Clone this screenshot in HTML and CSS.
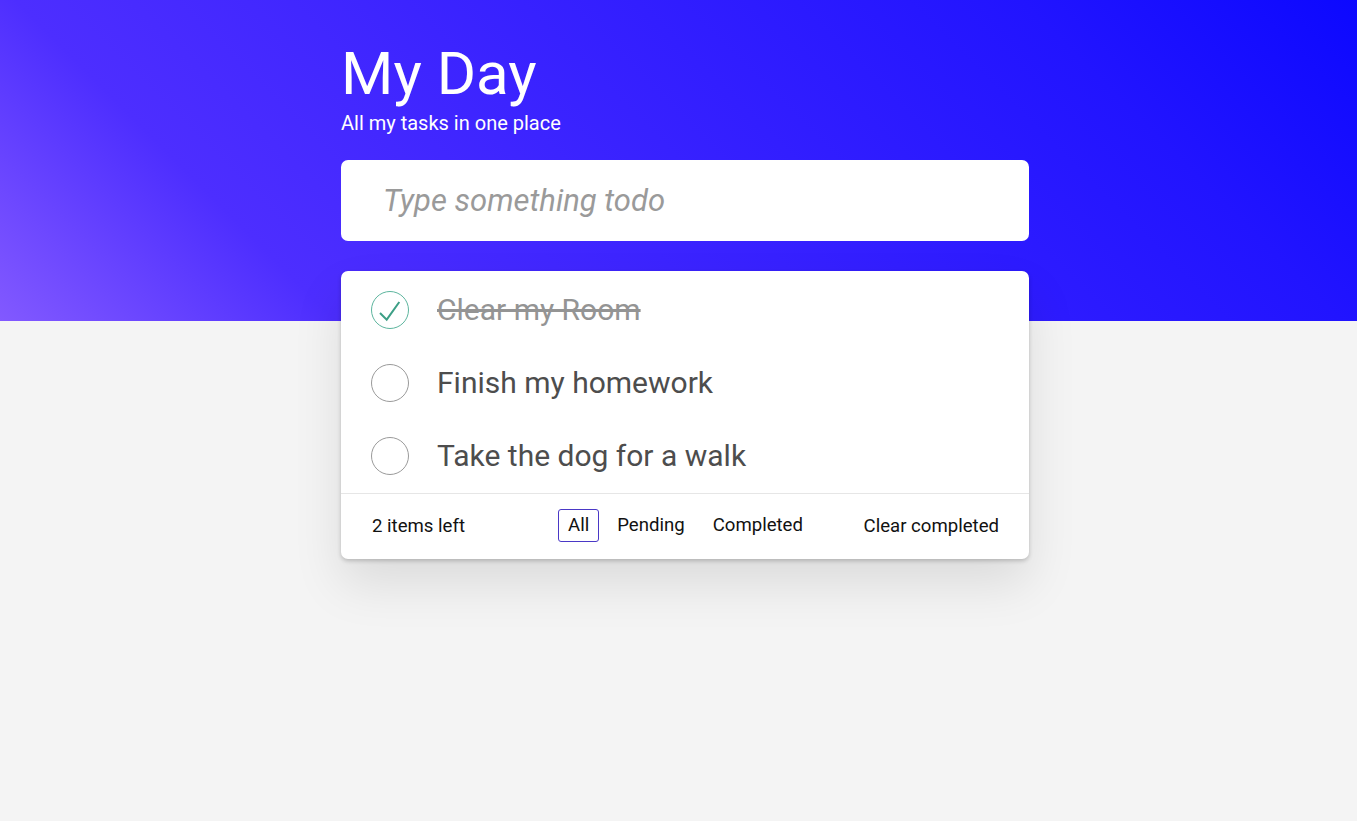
FILE: index.html
```html
<!DOCTYPE html>
<html lang="en">
<head>
<meta charset="utf-8">
<title>My Day</title>
<link rel="stylesheet" href="styles.css">
</head>
<body>
<main class="app">
  <header class="app-header">
    <h1 class="title">My Day</h1>
    <p class="subtitle">All my tasks in one place</p>
  </header>
  <input class="new-todo" type="text" placeholder="Type something todo">
  <section class="card">
    <ul class="todo-list">
      <li class="todo done">
        <span class="toggle">
          <svg viewBox="0 0 38 38" width="38" height="38"><circle cx="19" cy="19" r="18.5" fill="none" stroke="#5db59e" stroke-width="1"/><path d="M9 22 L15.7 28.7 L28.3 11" fill="none" stroke="#3d9f86" stroke-width="2"/></svg>
        </span>
        <span class="label">Clear my Room</span>
      </li>
      <li class="todo">
        <span class="toggle">
          <svg viewBox="0 0 38 38" width="38" height="38"><circle cx="19" cy="19" r="18.5" fill="none" stroke="#9a9a9a" stroke-width="1"/></svg>
        </span>
        <span class="label">Finish my homework</span>
      </li>
      <li class="todo">
        <span class="toggle">
          <svg viewBox="0 0 38 38" width="38" height="38"><circle cx="19" cy="19" r="18.5" fill="none" stroke="#9a9a9a" stroke-width="1"/></svg>
        </span>
        <span class="label">Take the dog for a walk</span>
      </li>
    </ul>
    <footer class="card-footer">
      <span class="count">2 items left</span>
      <nav class="filters">
        <a class="filter selected">All</a>
        <a class="filter">Pending</a>
        <a class="filter">Completed</a>
      </nav>
      <a class="clear">Clear completed</a>
    </footer>
  </section>
</main>
</body>
</html>
```
FILE: styles.css
```css
* { box-sizing: border-box; }
html, body { margin: 0; padding: 0; }
body {
  font-family: Roboto, "Liberation Sans", Arial, sans-serif;
  background-color: #f4f4f4;
  background-image: linear-gradient(45deg, #8259ff 0%, #4d2eff 20%, #2114ff 80%, #0c08ff 100%);
  background-size: 100% 321px;
  background-repeat: no-repeat;
  min-height: 821px;
}
.app {
  width: 688px;
  margin-left: calc(50% - 337.5px);
  padding-top: 45px;
}
.app-header { color: #fff; }
.title {
  margin: 0;
  font-size: 60px;
  font-weight: 400;
  line-height: 58px;
}
.subtitle {
  margin: 9px 0 0;
  font-size: 20px;
  line-height: 22px;
}
.new-todo {
  display: block;
  width: 100%;
  height: 81px;
  margin-top: 26px;
  border: none;
  border-radius: 7px;
  background: #fff;
  padding: 0 42px;
  font-family: Roboto, sans-serif;
  font-size: 31px;
  font-style: italic;
  color: #4d4d4d;
  outline: none;
}
.new-todo::placeholder { color: #9a9a9a; font-style: italic; }
.card {
  margin-top: 30px;
  background: #fff;
  border-radius: 7px;
  box-shadow: 0 2px 4px rgba(0,0,0,0.2), 0 25px 50px 0 rgba(0,0,0,0.1);
}
.todo-list { list-style: none; margin: 0; padding: 2px 0 1px; }
.todo {
  display: flex;
  align-items: center;
  height: 73px;
  padding-left: 30px;
  gap: 28px;
}
.toggle { display: flex; width: 38px; height: 38px; }
.label {
  font-size: 30px;
  color: #4d4d4d;
  line-height: 1;
}
.todo.done .label {
  color: #949494;
  text-decoration: line-through;
}
.card-footer {
  display: grid;
  grid-template-columns: 1fr auto 1fr;
  align-items: center;
  height: 66px;
  border-top: 1px solid #e6e6e6;
  padding: 0 30px 2px 31px;
  font-size: 18.6px;
  color: #111;
}
.filters { display: flex; gap: 8px; }
.filter {
  padding: 5px 9px;
  border: 1px solid transparent;
  border-radius: 3px;
  color: #111;
  line-height: 21px;
}
.filter.selected { border-color: #4a38c6; }
.clear { justify-self: end; color: #111; }
```
